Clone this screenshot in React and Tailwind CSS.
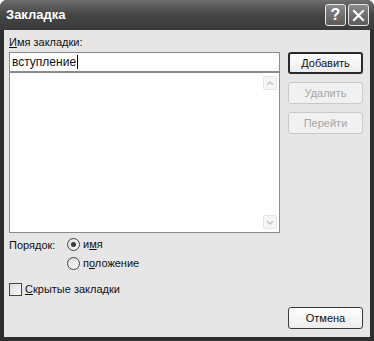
import React, { useState } from 'react';

const font = { fontFamily: '"Liberation Sans", Arial, sans-serif' };

const Button = ({ children, disabled, isDefault }) => (
  <button
    type="button"
    disabled={disabled}
    className={
      'h-[22px] w-[75px] rounded-[3px] text-[11px] leading-none ' +
      (disabled
        ? 'border border-[#c9c9c9] bg-[#f1f1f1] text-[#a6a6a6]'
        : isDefault
        ? 'border-2 border-[#2a2a2a] bg-gradient-to-b from-[#ffffff] to-[#ececec] text-[#111]'
        : 'border border-[#3a3a3a] bg-gradient-to-b from-[#ffffff] to-[#ececec] text-[#111]')
    }
  >
    {children}
  </button>
);

const Radio = ({ checked, label, onClick }) => (
  <label className="flex items-center gap-[3px] cursor-default" onClick={onClick}>
    <span className="flex h-[13px] w-[13px] items-center justify-center rounded-full border border-[#444] bg-gradient-to-br from-[#dcdcdc] to-[#fafafa]">
      {checked && <span className="h-[5px] w-[5px] rounded-full bg-[#3c3c3c]" />}
    </span>
    <span className="text-[11px] leading-[13px] text-[#111]">{label}</span>
  </label>
);

const ScrollArrow = ({ up }) => (
  <div className="flex h-[14px] w-[14px] items-center justify-center rounded-[2px] border border-[#e4e4e4] bg-[#f6f6f6]">
    <svg width="8" height="5" viewBox="0 0 8 5">
      <path
        d={up ? 'M1 4 L4 1 L7 4' : 'M1 1 L4 4 L7 1'}
        fill="none"
        stroke="#c4c4c4"
        strokeWidth="1.5"
      />
    </svg>
  </div>
);

export default function App() {
  const [order, setOrder] = useState('name');
  const [hidden, setHidden] = useState(false);

  return (
    <div style={font} className="flex h-[341px] w-[374px] flex-col overflow-hidden rounded-t-[7px] bg-[#2e2e2e]">
      {/* Title bar */}
      <div className="flex h-[30px] items-center justify-between bg-gradient-to-b from-[#6e6e6e] via-[#454545] to-[#3a3a3a] pl-[6px] pr-[5px]">
        <span className="text-[13px] font-bold text-white">Закладка</span>
        <div className="flex gap-[2px]">
          <div className="flex h-[22px] w-[21px] items-center justify-center rounded-[3px] border border-[#e8e8e8] bg-gradient-to-b from-[#8a8a8a] to-[#5a5a5a] text-[16px] font-bold leading-none text-white">
            ?
          </div>
          <div className="flex h-[22px] w-[21px] items-center justify-center rounded-[3px] border border-[#e8e8e8] bg-gradient-to-b from-[#8a8a8a] to-[#5a5a5a]">
            <svg width="13" height="13" viewBox="0 0 13 13">
              <path d="M2 2 L11 11 M11 2 L2 11" stroke="white" strokeWidth="2.2" strokeLinecap="square" />
            </svg>
          </div>
        </div>
      </div>

      {/* Body */}
      <div className="mx-[4px] mb-[4px] flex flex-1 gap-[8px] bg-[#e6e6e6] pl-[5px] pr-[7px] pt-[6px] pb-[8px]">
        <div className="flex w-[272px] flex-col">
          <div className="text-[11px] leading-[13px] text-[#111]">
            <span className="underline">И</span>мя закладки:
          </div>
          <div className="mt-[3px] flex h-[21px] items-center border border-b-2 border-[#8a8a8a] bg-white px-[2px] text-[12px] text-[#111]">
            вступление<span className="ml-[1px] h-[14px] w-[1px] bg-black" />
          </div>
          <div className="flex h-[160px] justify-end border border-t-0 border-[#8a8a8a] bg-white p-[3px] pr-[2px]">
            <div className="flex flex-col justify-between">
              <ScrollArrow up />
              <ScrollArrow />
            </div>
          </div>

          <div className="mt-[4px] flex">
            <span className="mt-[2px] w-[58px] text-[11px] leading-[13px] text-[#111]">Порядок:</span>
            <div className="flex flex-col gap-[6px] pt-[1px]">
              <Radio checked={order === 'name'} onClick={() => setOrder('name')} label={<>и<span className="underline">м</span>я</>} />
              <Radio checked={order === 'pos'} onClick={() => setOrder('pos')} label={<>п<span className="underline">о</span>ложение</>} />
            </div>
          </div>

          <label className="mt-[13px] flex items-center gap-[3px]" onClick={() => setHidden(!hidden)}>
            <span className="flex h-[13px] w-[13px] items-center justify-center border border-[#444] bg-gradient-to-br from-[#dcdcdc] to-[#fafafa] text-[10px] leading-none">
              {hidden ? '✓' : ''}
            </span>
            <span className="text-[11px] leading-[13px] text-[#111]">
              <span className="underline">С</span>крытые закладки
            </span>
          </label>
        </div>

        <div className="flex flex-col pt-[16px]">
          <div className="flex flex-col gap-[8px]">
            <Button isDefault>
              <span className="underline">Д</span>обавить
            </Button>
            <Button disabled>Удалить</Button>
            <Button disabled>Перейти</Button>
          </div>
          <div className="flex-1" />
          <Button>Отмена</Button>
        </div>
      </div>
    </div>
  );
}
